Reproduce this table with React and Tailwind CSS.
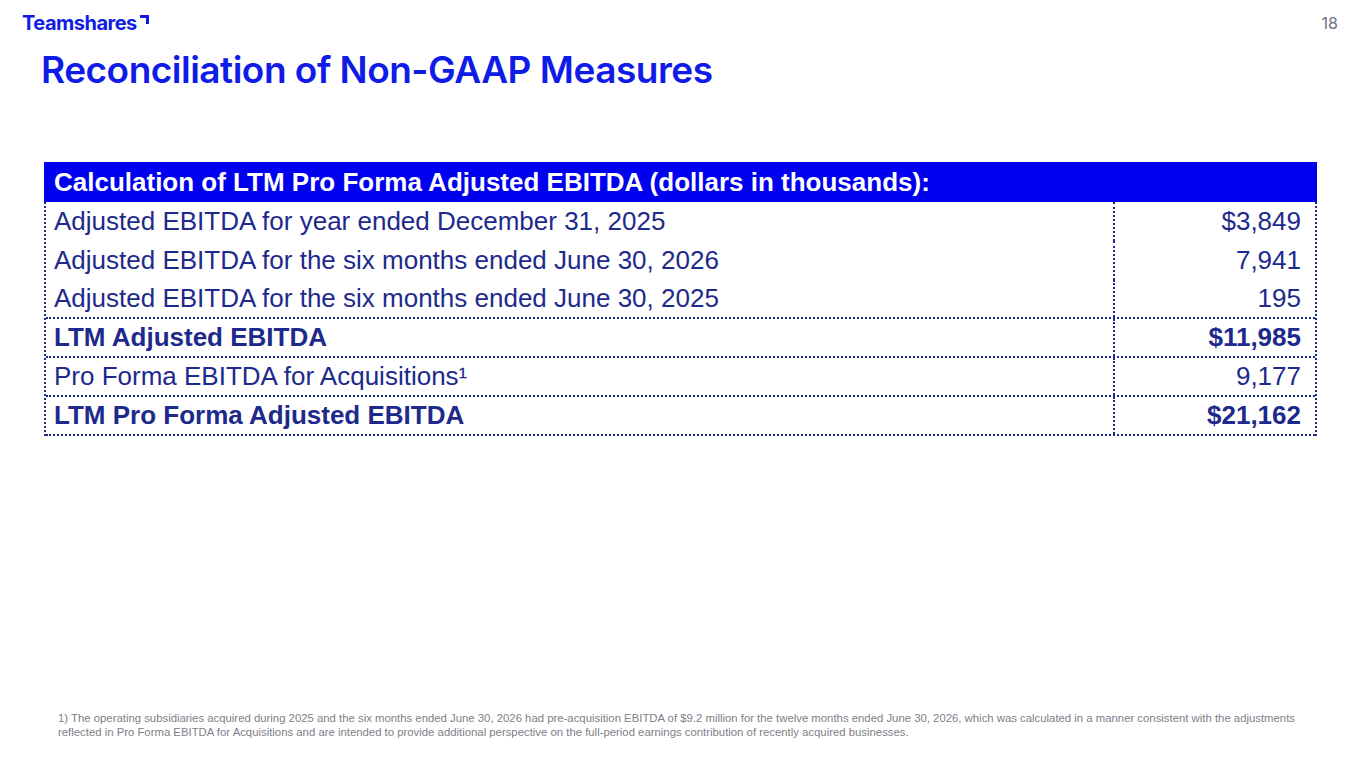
import React from 'react';

const rows = [
  { label: 'Adjusted EBITDA for year ended December 31, 2025', value: '$3,849', line: false },
  { label: 'Adjusted EBITDA for the six months ended June 30, 2026', value: '7,941', line: false },
  { label: 'Adjusted EBITDA for the six months ended June 30, 2025', value: '195', line: true },
  { label: 'LTM Adjusted EBITDA', value: '$11,985', bold: true, line: true },
  { label: 'Pro Forma EBITDA for Acquisitions¹', value: '9,177', line: true },
  { label: 'LTM Pro Forma Adjusted EBITDA', value: '$21,162', bold: true, line: true },
];

const App = () => {
  return (
    <div className="relative w-[1365px] h-[768px] bg-white overflow-hidden">
      {/* header */}
      <div className="flex items-start justify-between pl-[22px] pr-[27px] pt-[11px]">
        <div className="flex items-start text-[#0f1be6] font-['Inter',sans-serif] font-bold text-[20px] leading-[24px] tracking-[-0.5px]">
          Teamshares
          <svg width="9" height="9" viewBox="0 0 9 9" className="mt-[4px] ml-[3px]">
            <path d="M0 0 H9 V9 H6 V3 H0 Z" fill="#0f1be6" />
          </svg>
        </div>
        <div className="text-[#707080] text-[16px] font-['Inter',sans-serif] leading-[20px] pt-[2px]">18</div>
      </div>

      <h1 className="mt-[13px] ml-[41px] text-[#0f1be6] font-['Inter',sans-serif] font-semibold text-[37px] leading-[44px] tracking-[-0.5px]">
        Reconciliation of Non-GAAP Measures
      </h1>

      {/* table */}
      <div className="mt-[70px] ml-[44px] w-[1273px] font-['Liberation_Sans',Arial,sans-serif]">
        <div className="h-[40px] bg-[#0000f0] text-white font-bold text-[26px] flex items-center px-[10px]">
          Calculation of LTM Pro Forma Adjusted EBITDA (dollars in thousands):
        </div>
        <div className="border-l-2 border-r-2 border-dotted border-[#1d2a8c]">
          {rows.map((r, i) => (
            <div
              key={i}
              className={`flex h-[39px] text-[26px] text-[#1d2a8c] ${r.bold ? 'font-bold' : ''} ${
                r.line ? 'border-b-2 border-dotted border-[#1d2a8c]' : ''
              }`}
            >
              <div className="flex-1 flex items-center pl-[8px]">{r.label}</div>
              <div className="w-[202px] flex items-center justify-end pr-[14px] border-l-2 border-dotted border-[#1d2a8c]">
                {r.value}
              </div>
            </div>
          ))}
        </div>
      </div>

      {/* footnote */}
      <div className="absolute left-[58px] top-[711px] w-[1250px] font-['Liberation_Sans',Arial,sans-serif] text-[11.35px] leading-[14px] text-[#808088]">
        1) The operating subsidiaries acquired during 2025 and the six months ended June 30, 2026 had pre-acquisition EBITDA of $9.2 million for the twelve months ended June 30, 2026, which was calculated in a manner consistent with the adjustments reflected in Pro Forma EBITDA for Acquisitions and are intended to provide additional perspective on the full-period earnings contribution of recently acquired businesses.
      </div>
    </div>
  );
};

export default App;
